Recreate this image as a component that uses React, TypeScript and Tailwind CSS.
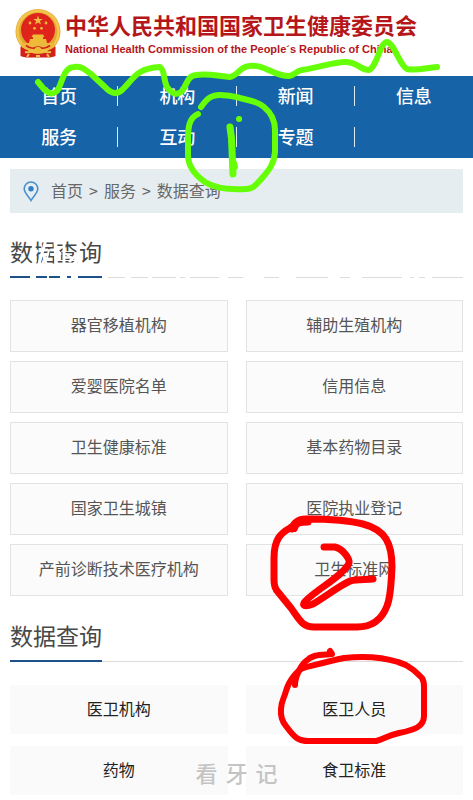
const navItems = ["首页", "机构", "新闻", "信息", "服务", "互动", "专题"];

const queryItems = [
  "器官移植机构",
  "辅助生殖机构",
  "爱婴医院名单",
  "信用信息",
  "卫生健康标准",
  "基本药物目录",
  "国家卫生城镇",
  "医院执业登记",
  "产前诊断技术医疗机构",
  "卫生标准网",
];

const dataItems = ["医卫机构", "医卫人员", "药物", "食卫标准"];

function Emblem() {
  return (
    <svg viewBox="0 0 46 49" className="h-[49px] w-[46px] shrink-0" aria-hidden="true">
      <path d="M6 34 L40 34 L40.500 47 L35 48.500 L11 48.500 L5.500 47 Z" fill="#d3201c" />
      <circle cx="23" cy="22.500" r="22.500" fill="#e3a832" />
      <circle cx="23" cy="22.500" r="20.500" fill="none" stroke="#f3c64e" strokeWidth="2.500" />
      <circle cx="23" cy="21" r="17" fill="#df241b" />
      <path d="M23 6.500 L24.200 9.900 L27.800 9.900 L24.900 12.100 L26 15.500 L23 13.400 L20 15.500 L21.100 12.100 L18.200 9.900 L21.800 9.900 Z" fill="#eec03e" />
      <g fill="#eebb38">
        <circle cx="15" cy="14" r="1.400" />
        <circle cx="31" cy="14" r="1.400" />
        <circle cx="19.500" cy="19.300" r="1.400" />
        <circle cx="26.500" cy="19.300" r="1.400" />
        <path d="M18 25.500 H28 L29.500 28 H16.500 Z M18 28 H28 V30 H18 Z M15 30 H31 L32 34 H14 Z" />
      </g>
      <path d="M6 34 H40 L36 41 H10 Z" fill="#ecb93c" />
      <path d="M11 36.500 Q17 41 22 38 H24 Q29 41 35 36.500" fill="none" stroke="#d3201c" strokeWidth="1.600" />
      <path d="M5.500 38 L14 42 L10 48 L6 47 Z M40.500 38 L32 42 L36 48 L40 47 Z" fill="#d3201c" />
      <circle cx="23" cy="41" r="3.200" fill="#eebb38" />
      <path d="M10 43 Q17 44 21 41 M36 43 Q29 44 25 41" fill="none" stroke="#efbd42" strokeWidth="2" />
      <path d="M14 45 L12 48 M32 45 L34 48 M21 47 H25" stroke="#f3c248" strokeWidth="2" />
    </svg>
  );
}

function PinIcon() {
  return (
    <svg viewBox="0 0 16 21" className="h-[21px] w-4 shrink-0" fill="none" aria-hidden="true">
      <path d="M8 19.500 C6 15.500 1.200 12 1.200 7.800 A6.800 6.800 0 0 1 14.800 7.800 C14.800 12 10 15.500 8 19.500 Z" stroke="#4a90cf" strokeWidth="1.600" />
      <circle cx="8" cy="7.800" r="2.700" fill="#2f7fc6" />
    </svg>
  );
}

function SectionTitle({ children }: { children: string }) {
  return (
    <div className="flex h-[50px] border-b border-[#dcdcdc]">
      <h2 className="-mb-px border-b-2 border-[#1d5288] text-[23px] leading-[46px] text-[#484848]">{children}</h2>
    </div>
  );
}

function Marks() {
  return (
    <svg
      viewBox="0 0 473 800"
      className="pointer-events-none absolute top-0 left-0 w-full"
      fill="none"
      strokeLinecap="round"
      strokeLinejoin="round"
      aria-hidden="true"
    >
      {/* white scribble over the first heading */}
      <g stroke="#fff" strokeWidth="3">
        <path d="M34 243 L35 264 M45 243 L39 264 M44 255 L46 264 M55 243 L56 264 M64 243 V264 M60 254 L56 248 M70 261 L78 253 V243 M74 264 L78 259 M37 251 L34 256" />
        <path d="M49 250 L47 258 M66 254 L72 258" strokeWidth="2" />
      </g>
      <path
        d="M30 277 H36 M47 277 H49 M60 277 H67 M71 277 H78 M102 277 H108 M125 277 H131 M148 277 H152 M176 277 H180 M185 277 H190 M219 277 H228 M243 277 H264 M279 277 H296 M328 277 H340 M350 277 H362 M402 277 H410 M414 277 H419 M425 277 H432"
        stroke="#fff"
        strokeWidth="5"
        strokeLinecap="butt"
      />
      <g stroke="#66ff08" strokeWidth="6">
        <path d="M38 82 L43 88 Q51 97 57 91 C62 85 63 67 74 67 C82 66 84 69 91 74 L105 87 Q115 98 123 89 C134 78 137 68 160 67 C165 70 163 79 167 87 Q175 98 182 91 C187 85 187 76 196 75 C207 73 218 76 230 77 C238 76 239 67 249 66 C265 64 273 76 289 76 C296 75 295 71 302 70 C319 68 335 61 347 62 C358 63 361 70 369 70 C377 67 380 42 387 42 C394 43 400 66 407 69 C416 71 426 68 437 67" />
        <path d="M201 107 C206 100 210 95 220 95 C230 95 233 96 240 98 C252 101 258 102 264 107 Q275 116 275 130 V152 C274 164 269 170 263 177 C256 185 253 189 246 189 C227 190 214 188 205 182 C195 175 188 166 188 155 V140 C188 127 189 118 198 114" />
        <path d="M230 127 Q232 138 232 150 L233 174" strokeWidth="7" />
        <path d="M239 119 h.1" />
        <path d="M234 163 L235 167" />
      </g>
      <g stroke="#fe0000">
        <path d="M292 529 C293 523 298 519 306 519 C329 519 348 520 363 524 C386 530 392 544 392 567 C391 584 391 596 387 606 Q379 627 357 627 H314 C302 627 299 619 291 608 L278 592 Q274 588 274 580 V558 C274 539 281 533 290 528 C297 522 301 522 308 522" strokeWidth="7" />
        <path d="M294 528 C296 520 305 520 306 521" strokeWidth="8" />
        <path d="M324 547 H335 C343 549 350 559 349 563 C345 575 309 594 304 603 C302 607 308 606 313 604 C325 597 339 586 350 581 C358 579 366 580 373 579" strokeWidth="7" />
        <path d="M295 685 C295 678 300 666 306 661 C313 654 321 655 332 654 L330 651" strokeWidth="6" />
        <path d="M303 668 C315 665 330 661 344 658 C362 656 379 656 398 662 C409 665 416 672 422 678 Q424 681 424 687 V716 C424 727 414 730 399 733 C386 736 384 739 376 741 H309 C296 741 293 735 286 726 Q280 719 281 709 C281 701 284 699 286 691 C289 680 298 670 303 668 Z" strokeWidth="6" />
      </g>
    </svg>
  );
}

export default function App() {
  return (
    <div className="relative min-h-screen overflow-hidden bg-white font-['Noto_Sans_CJK_SC',sans-serif]">
      <header className="flex h-[76px] items-start gap-1 pt-[9px] pl-[15px]">
        <Emblem />
        <div className="whitespace-nowrap text-[#b5161a]">
          <h1 className="text-[22px] leading-[30px] font-bold">中华人民共和国国家卫生健康委员会</h1>
          <p className="font-['Liberation_Sans',sans-serif] text-[11px] leading-5 font-bold">
            National Health Commission of the People´s Republic of China
          </p>
        </div>
      </header>

      <nav className="grid grid-cols-4 bg-[#1763a8]">
        {navItems.map((item, i) => (
          <a
            key={item}
            href="#"
            className="relative flex h-[41px] items-center justify-center pb-1 text-lg font-medium text-white"
          >
            {item}
            {i % 4 !== 3 && <span className="absolute top-[10px] right-0 h-5 w-px bg-[#dceaf5]" />}
          </a>
        ))}
      </nav>

      <main className="px-[10px] pt-[11px]">
        <div className="flex h-11 items-center gap-3 bg-[#e5edf1] pl-[13px] text-base text-[#686868]">
          <PinIcon />
          <p className="flex gap-1.5 pb-0.5">
            <a href="#">首页</a>
            <span>&gt;</span>
            <a href="#">服务</a>
            <span>&gt;</span>
            <a href="#">数据查询</a>
          </p>
        </div>

        <section className="pt-[15px]">
          <SectionTitle>数据查询</SectionTitle>
          <div className="mt-[22px] grid grid-cols-2 gap-x-[18px] gap-y-[9px]">
            {queryItems.map((item) => (
              <a
                key={item}
                href="#"
                className="flex h-[52px] items-center justify-center border border-[#e3e3e3] bg-[#fbfbfb] pb-1 text-base text-[#555]"
              >
                {item}
              </a>
            ))}
          </div>
        </section>

        <section className="pt-4 pb-[5px]">
          <SectionTitle>数据查询</SectionTitle>
          <div className="mt-[23px] grid grid-cols-2 gap-x-[18px] gap-y-3">
            {dataItems.map((item) => (
              <a
                key={item}
                href="#"
                className="flex h-[49px] items-center justify-center bg-[#fafafa] pb-1 text-base text-[#222]"
              >
                {item}
              </a>
            ))}
          </div>
        </section>
      </main>

      <div className="pointer-events-none absolute inset-x-0 bottom-3 flex justify-center gap-2 text-[22px] leading-8 font-medium text-[#c4c4c4]">
        <span>看</span>
        <span>牙</span>
        <span>记</span>
      </div>
      <Marks />
    </div>
  );
}
